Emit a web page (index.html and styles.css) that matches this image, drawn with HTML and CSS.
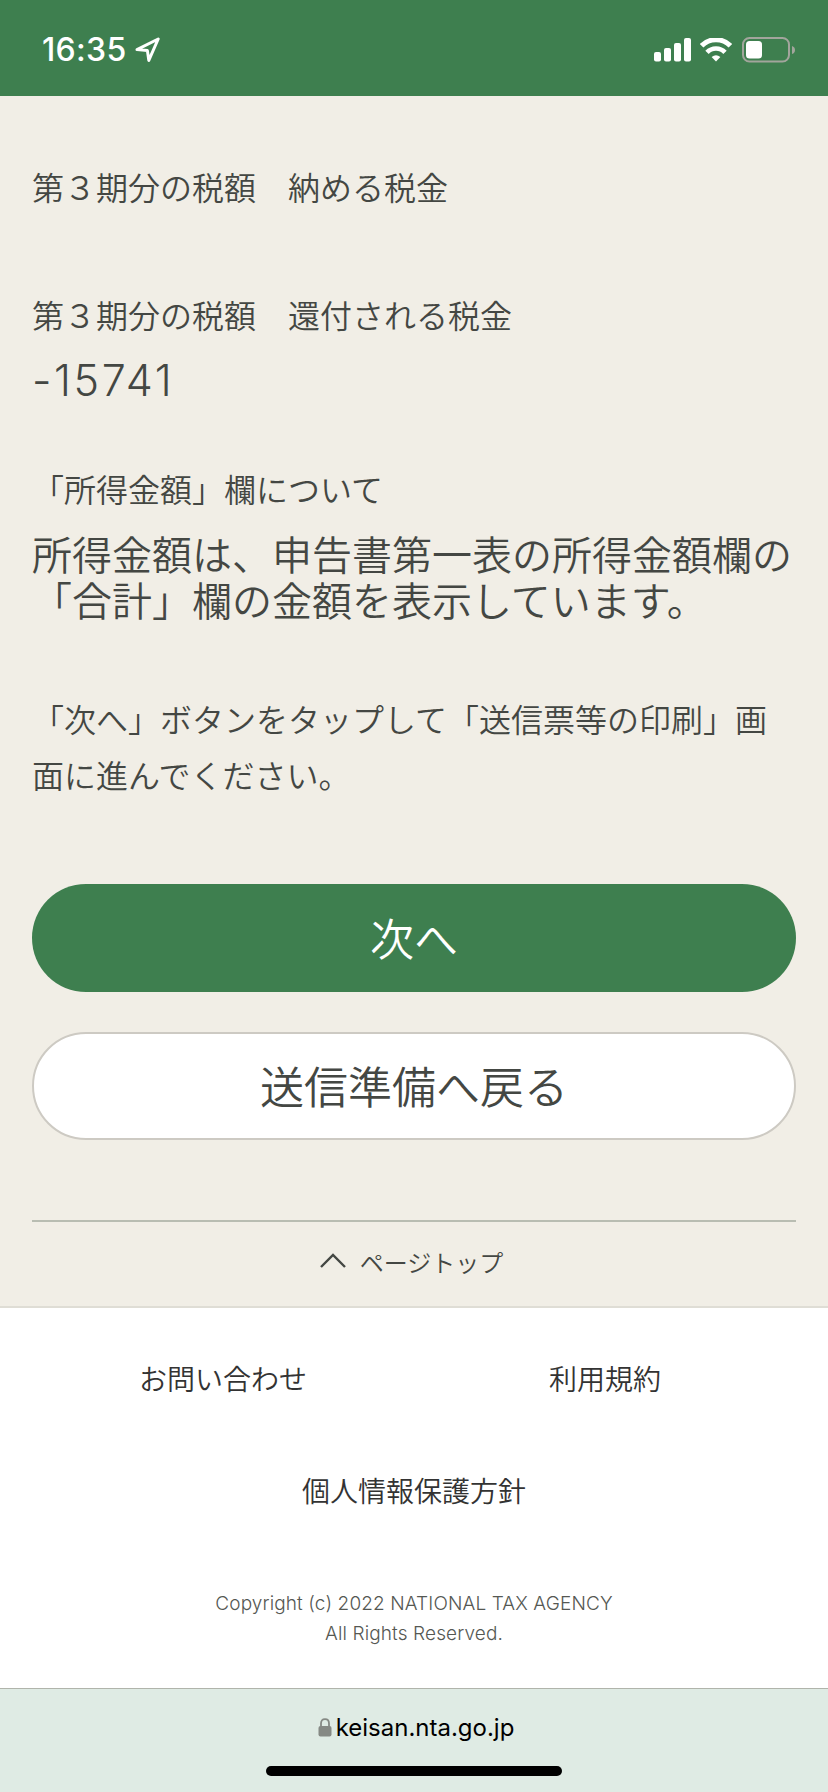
FILE: index.html
```html
<!DOCTYPE html>
<html lang="ja">
<head>
  <meta charset="UTF-8">
  <meta name="viewport" content="width=device-width, initial-scale=1.0">
  <title>送信票等の印刷</title>
  <link rel="stylesheet" href="styles.css">
</head>
<body>
  <div class="status-bar">
    <span class="time">16:35</span>
    <svg class="location" width="26" height="26" viewBox="0 0 26 26">
      <path d="M2 12.6 L23.2 2 L13.8 23.4 L12.4 13.6 Z" fill="none" stroke="#fff" stroke-width="3" stroke-linejoin="round"/>
    </svg>
    <div class="status-icons">
      <svg width="38" height="24" viewBox="0 0 38 24" fill="#fff">
        <rect x="0" y="14" width="7" height="9.5" rx="2"/>
        <rect x="10" y="10" width="7" height="13.5" rx="2"/>
        <rect x="20" y="5" width="7" height="18.5" rx="2"/>
        <rect x="30" y="0" width="7" height="23.5" rx="2"/>
      </svg>
      <svg class="wifi" width="32" height="24" viewBox="0 0 32 24">
        <path d="M1.6 7.8 A20 20 0 0 1 30.4 7.8" fill="none" stroke="#fff" stroke-width="5"/>
        <path d="M7 14.4 A12.3 12.3 0 0 1 25 14.4" fill="none" stroke="#fff" stroke-width="4.6"/>
        <path d="M16 23.5 L11.6 19 Q16 15.4 20.4 19 Z" fill="#fff"/>
      </svg>
      <svg class="battery" width="54" height="26" viewBox="0 0 54 26">
        <rect x="1" y="1" width="46" height="23.5" rx="6.5" fill="none" stroke="#a2a59c" stroke-width="2"/>
        <rect x="4" y="4" width="16" height="17.5" rx="3.5" fill="#fff"/>
        <path d="M50 9 Q53 10 53 13 Q53 16 50 17 Z" fill="#a2a59c"/>
      </svg>
    </div>
  </div>

  <main>
    <dl>
      <dt>第３期分の税額　納める税金</dt>
      <dd class="empty"></dd>
      <dt>第３期分の税額　還付される税金</dt>
      <dd class="amount">-15741</dd>
      <dt>「所得金額」欄について</dt>
      <dd>所得金額は、申告書第一表の所得金額欄の<br>「合計」欄の金額を表示しています。</dd>
    </dl>
    <p class="guide">「次へ」ボタンをタップして「送信票等の印刷」画<br>面に進んでください。</p>
    <button class="btn btn-next">次へ</button>
    <button class="btn btn-back">送信準備へ戻る</button>
    <a class="page-top">
      <svg width="28" height="18" viewBox="0 0 28 18">
        <path d="M2 15 L14 3 L26 15" fill="none" stroke="#444743" stroke-width="2.4"/>
      </svg>
      <span>ページトップ</span>
    </a>
  </main>

  <footer>
    <nav>
      <a>お問い合わせ</a>
      <a>利用規約</a>
      <a class="wide">個人情報保護方針</a>
    </nav>
    <p class="copyright">Copyright (c) 2022 NATIONAL TAX AGENCY<br>All Rights Reserved.</p>
  </footer>

  <div class="browser-bar">
    <div class="address">
      <svg width="14" height="19" viewBox="0 0 14 19">
        <path d="M3 9 V5.5 Q3 1.2 7 1.2 Q11 1.2 11 5.5 V9" fill="none" stroke="#858984" stroke-width="1.8"/>
        <rect x="0.5" y="8" width="13" height="10.5" rx="2" fill="#858984"/>
      </svg>
      <span>keisan.nta.go.jp</span>
    </div>
    <div class="home-indicator"></div>
  </div>
</body>
</html>
```

FILE: styles.css
```css
* {
  box-sizing: border-box;
}
body {
  margin: 0;
  height: 1792px;
  display: flex;
  flex-direction: column;
  overflow: hidden;
  font-family: "Noto Sans CJK JP", sans-serif;
  font-weight: 350;
  background-color: #f1eee6;
  color: #444743;
}
.status-bar {
  height: 96px;
  display: flex;
  align-items: center;
  padding: 4px 32px 0 42px;
  background-color: #3e7f4f;
  color: #fff;
}
.time {
  font-family: Inter, sans-serif;
  font-size: 32px;
  font-weight: 550;
  letter-spacing: 0.3px;
  line-height: 40px;
}
.location {
  margin-left: 9px;
}
.status-icons {
  display: flex;
  align-items: center;
  margin-left: auto;
}
.wifi {
  margin-left: 8px;
}
.battery {
  margin-left: 10px;
}
main {
  height: 1212px;
  padding: 62px 32px 0;
  border-bottom: 2px solid #dfddd5;
}
dl, dd, p {
  margin: 0;
}
dt {
  font-size: 32px;
  line-height: 56px;
}
dd {
  height: 92px;
  margin: 14px 0 68px;
  font-size: 40px;
  line-height: 46px;
}
.empty {
  height: 0;
  margin: 0 0 72px;
}
.amount {
  height: 46px;
  margin: 15px 0 57px;
  font-family: Inter, sans-serif;
  font-size: 43px;
  font-weight: 300;
  letter-spacing: 2.6px;
}
.guide {
  margin-bottom: 82px;
  font-size: 32px;
  line-height: 56px;
}
.btn {
  display: block;
  width: 100%;
  height: 108px;
  padding: 0 0 2px;
  border: none;
  border-radius: 54px;
  font-family: inherit;
  font-size: 44px;
  font-weight: 350;
  color: #444743;
}
.btn-next {
  margin-bottom: 40px;
  background-color: #3e7f4f;
  color: #fff;
}
.btn-back {
  margin-bottom: 80px;
  background-color: #fff;
  border: 2px solid #cdcac3;
}
.page-top {
  display: flex;
  justify-content: center;
  align-items: center;
  gap: 13px;
  height: 80px;
  border-top: 2px solid #b9bdb2;
  padding-right: 6px;
  font-size: 24px;
}
footer {
  height: 380px;
  padding-top: 42px;
  background-color: #fff;
  text-align: center;
}
nav {
  display: grid;
  grid-template-columns: 382px 382px;
  justify-content: center;
  row-gap: 56px;
  font-size: 28px;
  line-height: 56px;
  color: #333;
}
.wide {
  grid-column: 1 / 3;
}
.copyright {
  margin-top: 71px;
  font-family: Inter, sans-serif;
  font-size: 19px;
  font-weight: 300;
  letter-spacing: 0.12px;
  line-height: 30px;
  color: #555853;
}
.browser-bar {
  height: 104px;
  border-top: 1px solid #b0b4ab;
  background-color: #dfebe4;
}
.address {
  display: flex;
  justify-content: center;
  align-items: center;
  gap: 4px;
  height: 77px;
  padding-left: 4px;
  font-family: Inter, sans-serif;
  font-size: 24px;
  font-weight: 400;
  color: #000;
}
.home-indicator {
  width: 296px;
  height: 10px;
  margin: 0 auto;
  border-radius: 5px;
  background-color: #000;
}
```
